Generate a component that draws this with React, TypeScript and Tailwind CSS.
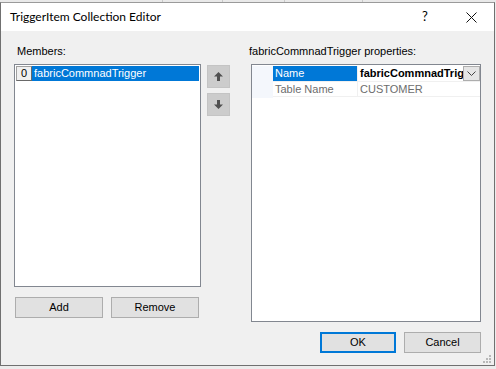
import React from "react";

const UI = { fontFamily: '"Liberation Sans", Arial, sans-serif' };
const TITLE = { fontFamily: 'Lato, "Noto Sans", sans-serif' };

function Arrow({ down }: { down?: boolean }) {
  return (
    <svg width="11" height="11" viewBox="0 0 11 11" className={down ? "rotate-180" : ""}>
      <path d="M5.5 1 L10 5.5 L7 5.5 L7 10 L4 10 L4 5.5 L1 5.5 Z" fill="#505050" />
    </svg>
  );
}

function WinButton({ label, width, primary }: { label: string; width: string; primary?: boolean }) {
  return (
    <div
      className={`${width} h-[21px] flex items-center justify-center text-[11px] text-black bg-[#e1e1e1] ${
        primary ? "border-2 border-[#0078d7]" : "border border-[#adadad]"
      }`}
    >
      {label}
    </div>
  );
}

export default function App() {
  return (
    <div className="w-[496px] h-[369px] bg-[#ececec] overflow-hidden" style={UI}>
      {/* background window peeking above */}
      <div className="h-[2px] flex bg-[#e9e9e9]">
        <div className="w-[163px] border-r border-[#c9c9c9]" />
        <div className="w-[60px] border-r border-[#c9c9c9]" />
        <div className="w-[62px] border-r border-[#c9c9c9]" />
        <div className="w-[78px] border-r border-[#c9c9c9]" />
      </div>

      <div className="w-[495px] h-[364px] border border-[#707070] border-t-[#9a9a9a] flex flex-col">
        {/* title bar */}
        <div className="h-[28px] bg-white flex items-center shrink-0">
          <span className="ml-[9px] text-[12px] text-black" style={TITLE}>
            TriggerItem Collection Editor
          </span>
          <span className="ml-auto w-[46px] text-center text-[13px] text-black" style={TITLE}>
            ?
          </span>
          <div className="w-[46px] flex justify-center">
            <svg width="11" height="11" viewBox="0 0 11 11">
              <path d="M0.5 0.5 L10.5 10.5 M10.5 0.5 L0.5 10.5" stroke="#111" strokeWidth="1" />
            </svg>
          </div>
        </div>

        {/* body */}
        <div className="flex-1 bg-[#f0f0f0] px-[13px] pt-[14px] flex flex-col relative">
          <div className="flex">
            {/* members column */}
            <div className="w-[187px] flex flex-col">
              <div className="h-[13px] leading-[13px] text-[11px] text-black ml-[3px]">Members:</div>
              <div className="mt-[6px] h-[223px] border border-[#828790] bg-white p-px">
                <div className="flex h-[15px]">
                  <div className="w-[16px] h-[15px] bg-[#f0f0f0] border border-[#a0a0a0] border-r-[#696969] border-b-[#696969] text-[11px] leading-[13px] text-center text-black">
                    0
                  </div>
                  <div className="flex-1 bg-[#0078d7] text-white text-[11px] leading-[15px] pl-[2px]">
                    fabricCommnadTrigger
                  </div>
                </div>
              </div>
              <div className="mt-[10px] ml-px flex gap-[8px]">
                <WinButton label="Add" width="w-[88px]" />
                <WinButton label="Remove" width="w-[88px]" />
              </div>
            </div>

            {/* move up / down */}
            <div className="ml-[6px] w-[23px] pt-[20px] flex flex-col gap-[5px]">
              <div className="w-[23px] h-[23px] bg-[#cccccc] border border-[#c4c4c4] flex items-center justify-center">
                <Arrow />
              </div>
              <div className="w-[23px] h-[23px] bg-[#cccccc] border border-[#c4c4c4] flex items-center justify-center">
                <Arrow down />
              </div>
            </div>

            {/* properties column */}
            <div className="ml-[19px] w-[232px] flex flex-col">
              <div className="h-[13px] leading-[13px] text-[11px] text-black">
                fabricCommnadTrigger properties:
              </div>
              <div className="mt-[6px] ml-[2px] w-[230px] h-[258px] border border-[#828790] bg-white pt-px">
                <div className="flex h-[32px]">
                  <div className="w-[21px] shrink-0 bg-[#f4f7fc]" />
                  <div className="flex-1 min-w-0 flex flex-col">
                    <div className="flex h-[15px]">
                      <div className="w-[84px] shrink-0 bg-[#0078d7] text-white text-[11px] leading-[15px] pl-[2px]">
                        Name
                      </div>
                      <div className="w-px shrink-0 bg-[#f0f0f0]" />
                      <div className="flex-1 min-w-0 flex">
                        <div className="flex-1 min-w-0 overflow-hidden whitespace-nowrap text-[11px] leading-[15px] font-bold text-black pl-[2px]">
                          fabricCommnadTrigger
                        </div>
                        <div className="w-[17px] shrink-0 h-[15px] bg-[#e5e5e5] border border-[#adadad] flex items-center justify-center">
                          <svg width="9" height="6" viewBox="0 0 9 6">
                            <path d="M0.5 0.5 L4.5 4.5 L8.5 0.5" stroke="#444" fill="none" strokeWidth="1" />
                          </svg>
                        </div>
                      </div>
                    </div>
                    <div className="h-px bg-[#f0f0f0]" />
                    <div className="flex h-[15px] border-b border-[#f0f0f0]">
                      <div className="w-[84px] shrink-0 text-[#6d6d6d] text-[11px] leading-[15px] pl-[2px]">
                        Table Name
                      </div>
                      <div className="w-px shrink-0 bg-[#f0f0f0]" />
                      <div className="flex-1 text-[#6d6d6d] text-[11px] leading-[15px] pl-[2px]">CUSTOMER</div>
                    </div>
                  </div>
                </div>
              </div>
            </div>
          </div>

          {/* dialog buttons */}
          <div className="mt-[10px] flex justify-end gap-[8px]">
            <WinButton label="OK" width="w-[76px]" primary />
            <WinButton label="Cancel" width="w-[77px]" />
          </div>

          {/* size grip */}
          <svg className="absolute right-[3px] bottom-[2px]" width="8" height="8" viewBox="0 0 8 8">
            <rect x="6" y="0" width="2" height="2" fill="#b8b8b8" />
            <rect x="3" y="3" width="2" height="2" fill="#b8b8b8" />
            <rect x="6" y="3" width="2" height="2" fill="#b8b8b8" />
            <rect x="0" y="6" width="2" height="2" fill="#b8b8b8" />
            <rect x="3" y="6" width="2" height="2" fill="#b8b8b8" />
            <rect x="6" y="6" width="2" height="2" fill="#b8b8b8" />
          </svg>
        </div>
      </div>
    </div>
  );
}
